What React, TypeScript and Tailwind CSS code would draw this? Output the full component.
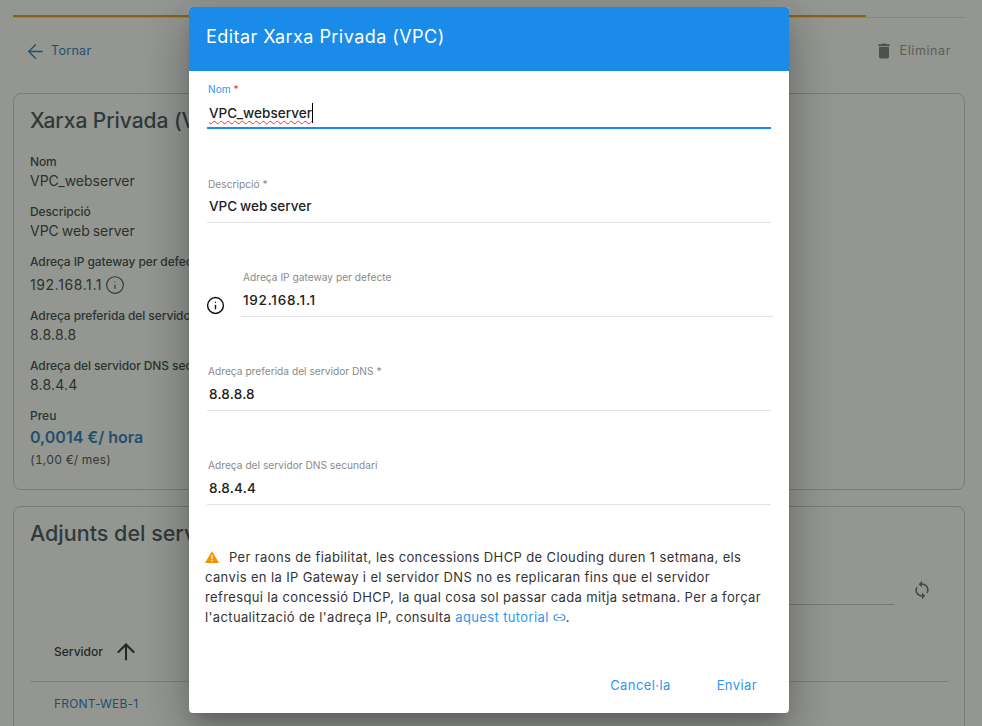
import { ArrowLeft, ArrowUp, Info, Link2 } from "lucide-react";
import { MdDelete, MdSync } from "react-icons/md";

function Detail({ label, value, children, className }: { label: string; value: string; children?: React.ReactNode; className?: string }) {
  return (
    <div className="mb-[12px]">
      <div className="text-[12px] leading-[18px] font-medium tracking-[-0.1px] text-[#2f3a40] whitespace-nowrap">{label}</div>
      <div className={`flex items-center gap-[3px] text-[14px] leading-[20px] [word-spacing:-1px] text-[#333] whitespace-nowrap ${className ?? "tracking-normal"}`}>
        {value}
        {children}
      </div>
    </div>
  );
}

function Field({ label, value, star, focus, low, className, valueClass }: { label: string; value: string; star?: boolean; focus?: boolean; low?: boolean; className?: string; valueClass?: string }) {
  return (
    <div className={className}>
      <div className={`text-[10.2px] leading-[14px] pl-[1px] whitespace-nowrap ${focus ? "text-[#2f96ee]" : "text-[#8a8a8a]"}`}>
        {label}
        {star && <span className={focus ? "text-[#e53935]" : ""}> *</span>}
      </div>
      <div className={`pl-[2px] text-[13.5px] leading-[20px] font-medium [word-spacing:-1px] text-[#222] ${valueClass ?? "tracking-[0.05px]"} ${focus ? "mt-[7px] h-[26px] border-b-2 border-[#1a8be8]" : low ? "mt-[6px] h-[27px] border-b border-[#e2e2e2]" : "mt-[5px] h-[27px] border-b border-[#e2e2e2]"}`}>
        {focus ? (
          <span className="inline-block border-r border-black underline decoration-wavy decoration-[#e53935] decoration-1 underline-offset-2">{value}</span>
        ) : (
          value
        )}
      </div>
    </div>
  );
}

export default function App() {
  return (
    <div className="relative h-[726px] w-[982px] overflow-hidden bg-white text-[#333] font-['Inter',sans-serif]">
      <div className="pl-[13px] pr-[17px]">
        <div className="pt-[15px]">
          <div className="h-[2px] w-[853px] bg-[#f59300]" />
          <div className="h-px bg-[#dcdcdc]" />
        </div>
        <div className="mb-[9px] flex h-[66px] items-center justify-between pl-[11px] pr-[14px]">
          <div className="flex items-center gap-[4px] text-[12.5px] tracking-[0.3px] text-[#1d6fb8]">
            <ArrowLeft size={23} strokeWidth={1.4} />
            Tornar
          </div>
          <div className="flex items-center gap-[6px] text-[12.5px] tracking-[0.6px] text-[#8f8f8f]">
            <MdDelete size={20} color="#757575" />
            Eliminar
          </div>
        </div>
        <div className="h-[397px] rounded-[8px] border border-[#c8c8c8] px-[16px] pt-[12px]">
          <div className="text-[21px] leading-[30px] font-medium tracking-[-0.05px] text-[#37474f] whitespace-nowrap">Xarxa Privada (VPC)</div>
          <div className="mt-[17px]">
            <Detail label="Nom" value="VPC_webserver" />
            <Detail label="Descripció" value="VPC web server" />
            <Detail label="Adreça IP gateway per defecte" value="192.168.1.1" className="pt-[4px] tracking-[0.6px]">
              <Info size={20} strokeWidth={1.3} />
            </Detail>
            <Detail label="Adreça preferida del servidor DNS" value="8.8.8.8" className="tracking-[0.2px]" />
            <Detail label="Adreça del servidor DNS secundari" value="8.8.4.4" className="tracking-[0.2px]" />
            <div className="mt-[1px] text-[12px] leading-[18px] font-medium text-[#2f3a40]">Preu</div>
            <div className="text-[16px] leading-[24px] font-semibold text-[#1d6fb8]">0,0014 €/ hora</div>
            <div className="text-[12px] leading-[22px] tracking-[0.2px] tabular-nums text-[#444]">(1,00 €/ mes)</div>
          </div>
        </div>
        <div className="mt-[16px] h-[300px] rounded-[8px] border border-[#c8c8c8] px-[16px] pt-[11px]">
          <div className="text-[21.5px] leading-[30px] font-medium text-[#37474f] whitespace-nowrap">Adjunts del servidor</div>
          <div className="mt-[15px] flex justify-end pr-[54px]">
            <div className="h-[42px] w-[300px] border-b border-[#c4c4c4]" />
          </div>
          <div className="relative">
            <div className="flex h-[77px] items-start gap-[10px] border-b border-[#d0d0d0] pl-[24px] pt-[37px] text-[12px] leading-[20px] font-medium text-[#222]">
              Servidor
              <ArrowUp size={26} strokeWidth={1.9} className="-mt-[3px]" />
            </div>
            <div className="absolute -top-[25px] right-[16px] text-[#666]">
              <MdSync size={20} />
            </div>
            <div className="pl-[24px] pt-[14px] text-[12px] leading-[16px] tracking-[0.2px] text-[#1d6fb8]">FRONT-WEB-1</div>
          </div>
        </div>
      </div>

      <div className="absolute inset-0 bg-[rgba(40,46,36,0.5)]" />

      <div className="absolute left-[189px] top-[7px] flex h-[706px] w-[600px] flex-col overflow-hidden rounded-[4px] bg-white shadow-[0_11px_15px_-7px_rgba(0,0,0,0.2),0_24px_38px_3px_rgba(0,0,0,0.14),0_9px_46px_8px_rgba(0,0,0,0.12)]">
        <div className="flex h-[64px] shrink-0 items-center bg-[#1a8be8] pb-[5px] pl-[17px] text-[18px] tracking-[0.45px] text-white">
          Editar Xarxa Privada (VPC)
        </div>
        <div className="flex-1 pl-[18px] pr-[18px] pt-[11px]">
          <Field label="Nom" value="VPC_webserver" star focus />
          <Field label="Descripció" value="VPC web server" star className="mt-[48px]" />
          <div className="mt-[47px] flex items-start -mr-[2px]">
            <Info size={19} strokeWidth={1.8} className="mt-[26px] -ml-[1px] shrink-0 text-[#111]" />
            <Field label="Adreça IP gateway per defecte" value="192.168.1.1" low valueClass="tracking-[0.75px]" className="ml-[16px] flex-1 [&>div:first-child]:pl-[2px]" />
          </div>
          <Field label="Adreça preferida del servidor DNS" value="8.8.8.8" star low valueClass="tracking-[0.2px]" className="mt-[47px]" />
          <Field label="Adreça del servidor DNS secundari" value="8.8.4.4" low valueClass="tracking-[0.2px]" className="mt-[47px]" />
          <div className="mt-[42px] -ml-[2px] pr-[6px] text-[13px] leading-[20px] tracking-[0.37px] text-[#333]">
            <svg viewBox="0 0 14 12" className="mr-[10px] inline-block h-[12px] w-[14px] align-[-1px]">
              <path d="M7 0 L14 12 H0 Z" fill="#f59300" />
              <rect x="6.4" y="4.2" width="1.2" height="4" fill="#fff" />
              <rect x="6.4" y="9" width="1.2" height="1.3" fill="#fff" />
            </svg>
            Per raons de fiabilitat, les concessions DHCP de Clouding duren 1 setmana, els canvis en la IP Gateway i el servidor DNS no es replicaran fins que el servidor refresqui la concessió DHCP, la qual cosa sol passar cada mitja setmana. Per a forçar l'actualització de l'adreça IP, consulta{" "}
            <span className="text-[#2f96ee]">
              aquest tutorial <Link2 size={13} className="inline-block align-[-2px]" />
            </span>
            .
          </div>
        </div>
        <div className="flex h-[56px] shrink-0 items-start justify-end gap-[46px] pr-[32px] pt-[18px] text-[13px] leading-[20px] tracking-[0.4px] text-[#2f96ee]">
          <span>Cancel·la</span>
          <span>Enviar</span>
        </div>
      </div>
    </div>
  );
}
